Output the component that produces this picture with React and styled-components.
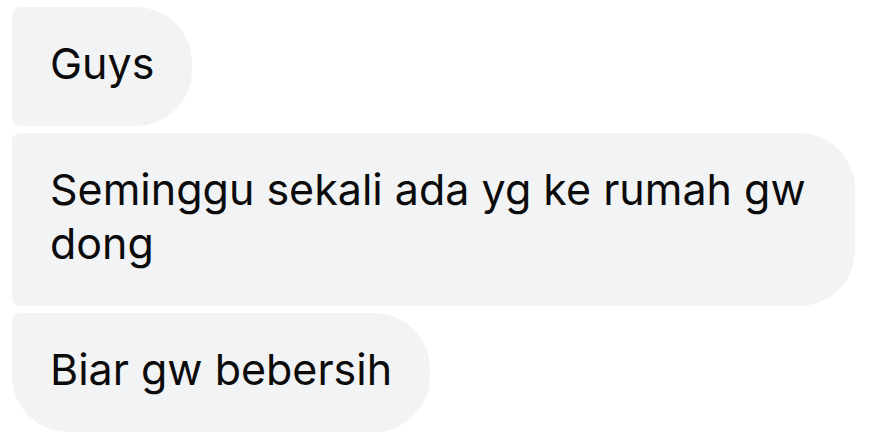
import React from 'react'
import styled, { createGlobalStyle } from 'styled-components'

const GlobalStyle = createGlobalStyle`
  html, body {
    margin: 0;
    padding: 0;
    background: #ffffff;
  }
`

const messages = [
  { id: 0, text: '\u00a0', width: 366 },
  { id: 1, text: 'Guys' },
  { id: 2, text: 'Seminggu sekali ada yg ke rumah gw dong' },
  { id: 3, text: 'Biar gw bebersih' },
]

export default function App() {
  return (
    <>
      <GlobalStyle />
      <Thread>
        {messages.map((m, i) => (
          <Bubble
            key={m.id}
            $first={i === 0}
            $last={i === messages.length - 1}
            $width={m.width}
          >
            {m.text}
          </Bubble>
        ))}
      </Thread>
    </>
  )
}

const Thread = styled.div`
  height: 100vh;
  box-sizing: border-box;
  display: flex;
  flex-direction: column;
  justify-content: flex-end;
  align-items: flex-start;
  gap: 7px;
  padding: 0 12px 7px;
  overflow: hidden;
`

const Bubble = styled.div`
  flex-shrink: 0;
  box-sizing: border-box;
  width: ${p => (p.$width ? `${p.$width}px` : 'fit-content')};
  max-width: 843px;
  padding: 29px 38px 36px;
  background: #f2f3f5;
  color: #0b0b0c;
  font-family: Inter, "Noto Sans", sans-serif;
  font-size: 43px;
  line-height: 54px;
  letter-spacing: 0;
  border-radius: ${p => (p.$first ? '56px' : '8px')} 56px 56px
    ${p => (p.$last ? '56px' : '8px')};
`
